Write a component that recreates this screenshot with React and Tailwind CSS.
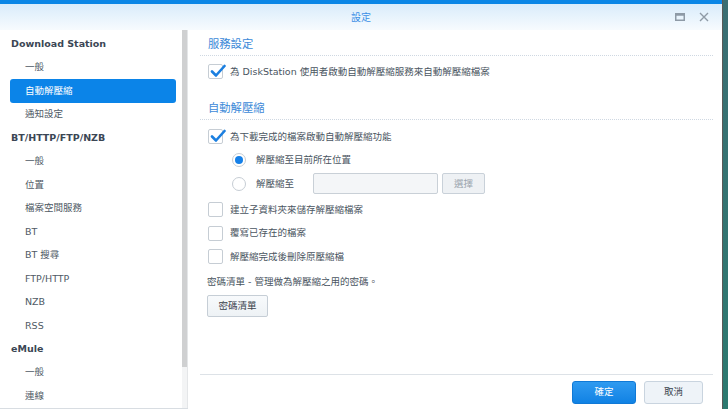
import React from 'react';

const items = [
  { t: 'Download Station', h: true },
  { t: '一般' },
  { t: '自動解壓縮', sel: true },
  { t: '通知設定' },
  { t: 'BT/HTTP/FTP/NZB', h: true },
  { t: '一般' },
  { t: '位置' },
  { t: '檔案空間服務' },
  { t: 'BT' },
  { t: 'BT 搜尋' },
  { t: 'FTP/HTTP' },
  { t: 'NZB' },
  { t: 'RSS' },
  { t: 'eMule', h: true },
  { t: '一般' },
  { t: '連線' },
];

function Check({ checked }) {
  return (
    <div className="relative w-[15px] h-[15px] shrink-0 rounded-[2px] border border-[#c6cdd4] bg-white">
      {checked && (
        <svg className="absolute left-[1px] top-[-1px]" width="16" height="14" viewBox="0 0 16 14">
          <path d="M2 7.5 L6 11.5 L14.5 2" fill="none" stroke="#1b7fe0" strokeWidth="2.6" strokeLinecap="round" strokeLinejoin="round" />
        </svg>
      )}
    </div>
  );
}

function Radio({ on }) {
  return (
    <div className="w-[14px] h-[14px] shrink-0 rounded-full border border-[#c6cdd4] bg-white flex items-center justify-center">
      {on && <div className="w-[8px] h-[8px] rounded-full bg-[#1580e8]" />}
    </div>
  );
}

export default function App() {
  return (
    <div className="w-[728px] h-[409px] overflow-hidden flex bg-[#2f6f6c] font-['DejaVu_Sans','Noto_Sans_CJK_TC',sans-serif] text-[9.5px]">
      <div className="w-[723px] h-full flex flex-col bg-white border-r border-[#5a5a58]">
        <div className="h-[4px] bg-[#0a86e6]" />
        <div className="h-[26px] bg-gradient-to-b from-[#d9ecfb] to-[#f7fbfe] grid grid-cols-[1fr_auto_1fr] items-center">
          <div />
          <div className="text-[10px] text-[#3b8fe6]">設定</div>
          <div className="flex justify-end items-center gap-[14px] pr-[13px]">
            <svg width="10" height="8" viewBox="0 0 10 8">
              <rect x="0.75" y="0.75" width="8.5" height="6.5" fill="none" stroke="#8e9aa6" strokeWidth="1.5" />
              <rect x="0.75" y="0.75" width="8.5" height="2" fill="#8e9aa6" />
            </svg>
            <svg width="10" height="10" viewBox="0 0 10 10">
              <path d="M1 1 L9 9 M9 1 L1 9" stroke="#8e9aa6" strokeWidth="1.4" />
            </svg>
          </div>
        </div>
        <div className="flex-1 flex min-h-0">
          {/* Sidebar */}
          <div className="w-[188px] h-full flex border-b border-[#d8dde2]">
            <div className="flex-1 pl-[10px] pr-[6px] pt-[2.3px]">
              {items.map((it, i) => (
                <div
                  key={i}
                  className={
                    'h-[23.47px] flex items-center rounded-[3px] ' +
                    (it.h
                      ? 'pl-[1px] font-bold text-[#3b4654]'
                      : it.sel
                      ? 'pl-[15px] bg-[#0b84e8] text-white'
                      : 'pl-[15px] text-[#4f5a65]')
                  }
                >
                  {it.t}
                </div>
              ))}
            </div>
            <div className="w-[6px] h-full bg-[#f3f4f5] border-r border-[#e4e6e8]">
              <div className="h-[337px] bg-[#cfd0d1]" />
            </div>
          </div>
          {/* Main */}
          <div className="flex-1 flex flex-col pl-[12px] pr-[9px] pt-[5px] text-[#4a5561]">
            <div className="h-[21px] leading-[20px] pl-[8px] text-[11.3px] text-[#3d8ad8] border-b border-dotted border-[#cfd8e2]">
              服務設定
            </div>
            <div className="mt-[4px] h-[23.5px] pl-[8px] flex items-center gap-[7px]">
              <Check checked />
              <span>為 DiskStation 使用者啟動自動解壓縮服務來自動解壓縮檔案</span>
            </div>
            <div className="mt-[15.5px] h-[21px] leading-[20px] pl-[8px] text-[11.3px] text-[#3d8ad8] border-b border-dotted border-[#cfd8e2]">
              自動解壓縮
            </div>
            <div className="mt-[5px] h-[23.5px] pl-[8px] flex items-center gap-[7px]">
              <Check checked />
              <span>為下載完成的檔案啟動自動解壓縮功能</span>
            </div>
            <div className="h-[23.5px] pl-[32px] flex items-center gap-[10px]">
              <Radio on />
              <span>解壓縮至目前所在位置</span>
            </div>
            <div className="h-[23.5px] pl-[32px] flex items-center">
              <Radio />
              <span className="ml-[10px] w-[57px]">解壓縮至</span>
              <div className="w-[125px] h-[21px] rounded-[2px] border border-[#c9d0d7] bg-[#f4f6f8]" />
              <div className="ml-[4px] w-[43px] h-[21px] rounded-[2px] border border-[#c9d1d9] bg-[#eef1f4] text-[#9aa3ac] flex items-center justify-center">
                選擇
              </div>
            </div>
            <div className="mt-[2.5px] h-[23.5px] pl-[8px] flex items-center gap-[7px]">
              <Check />
              <span>建立子資料夾來儲存解壓縮檔案</span>
            </div>
            <div className="h-[23.5px] pl-[8px] flex items-center gap-[7px]">
              <Check />
              <span>覆寫已存在的檔案</span>
            </div>
            <div className="h-[23.5px] pl-[8px] flex items-center gap-[7px]">
              <Check />
              <span>解壓縮完成後刪除原壓縮檔</span>
            </div>
            <div className="mt-[1.5px] h-[23.5px] pl-[7px] flex items-center">
              密碼清單 - 管理做為解壓縮之用的密碼。
            </div>
            <div className="mt-[1.25px] pl-[7px]">
              <div className="w-[61px] h-[22px] rounded-[2px] border border-[#c6ced6] bg-gradient-to-b from-[#f8fafc] to-[#eef2f5] text-[#3a434c] flex items-center justify-center">
                密碼清單
              </div>
            </div>
            <div className="flex-1" />
            <div className="h-[35px] border-t border-[#dde2e7] flex justify-end items-start pt-[6px] pr-[10px] gap-[8px]">
              <div className="w-[64px] h-[23px] rounded-[3px] bg-gradient-to-b from-[#2e9af0] to-[#0f82e4] border border-[#1079d6] text-white flex items-center justify-center">
                確定
              </div>
              <div className="w-[59px] h-[23px] rounded-[3px] bg-[#eef3f8] border border-[#c9d4df] text-[#3a434c] flex items-center justify-center">
                取消
              </div>
            </div>
          </div>
        </div>
      </div>
      <div className="flex-1 bg-gradient-to-b from-[#3b6e73] to-[#2c7a70]" />
    </div>
  );
}
